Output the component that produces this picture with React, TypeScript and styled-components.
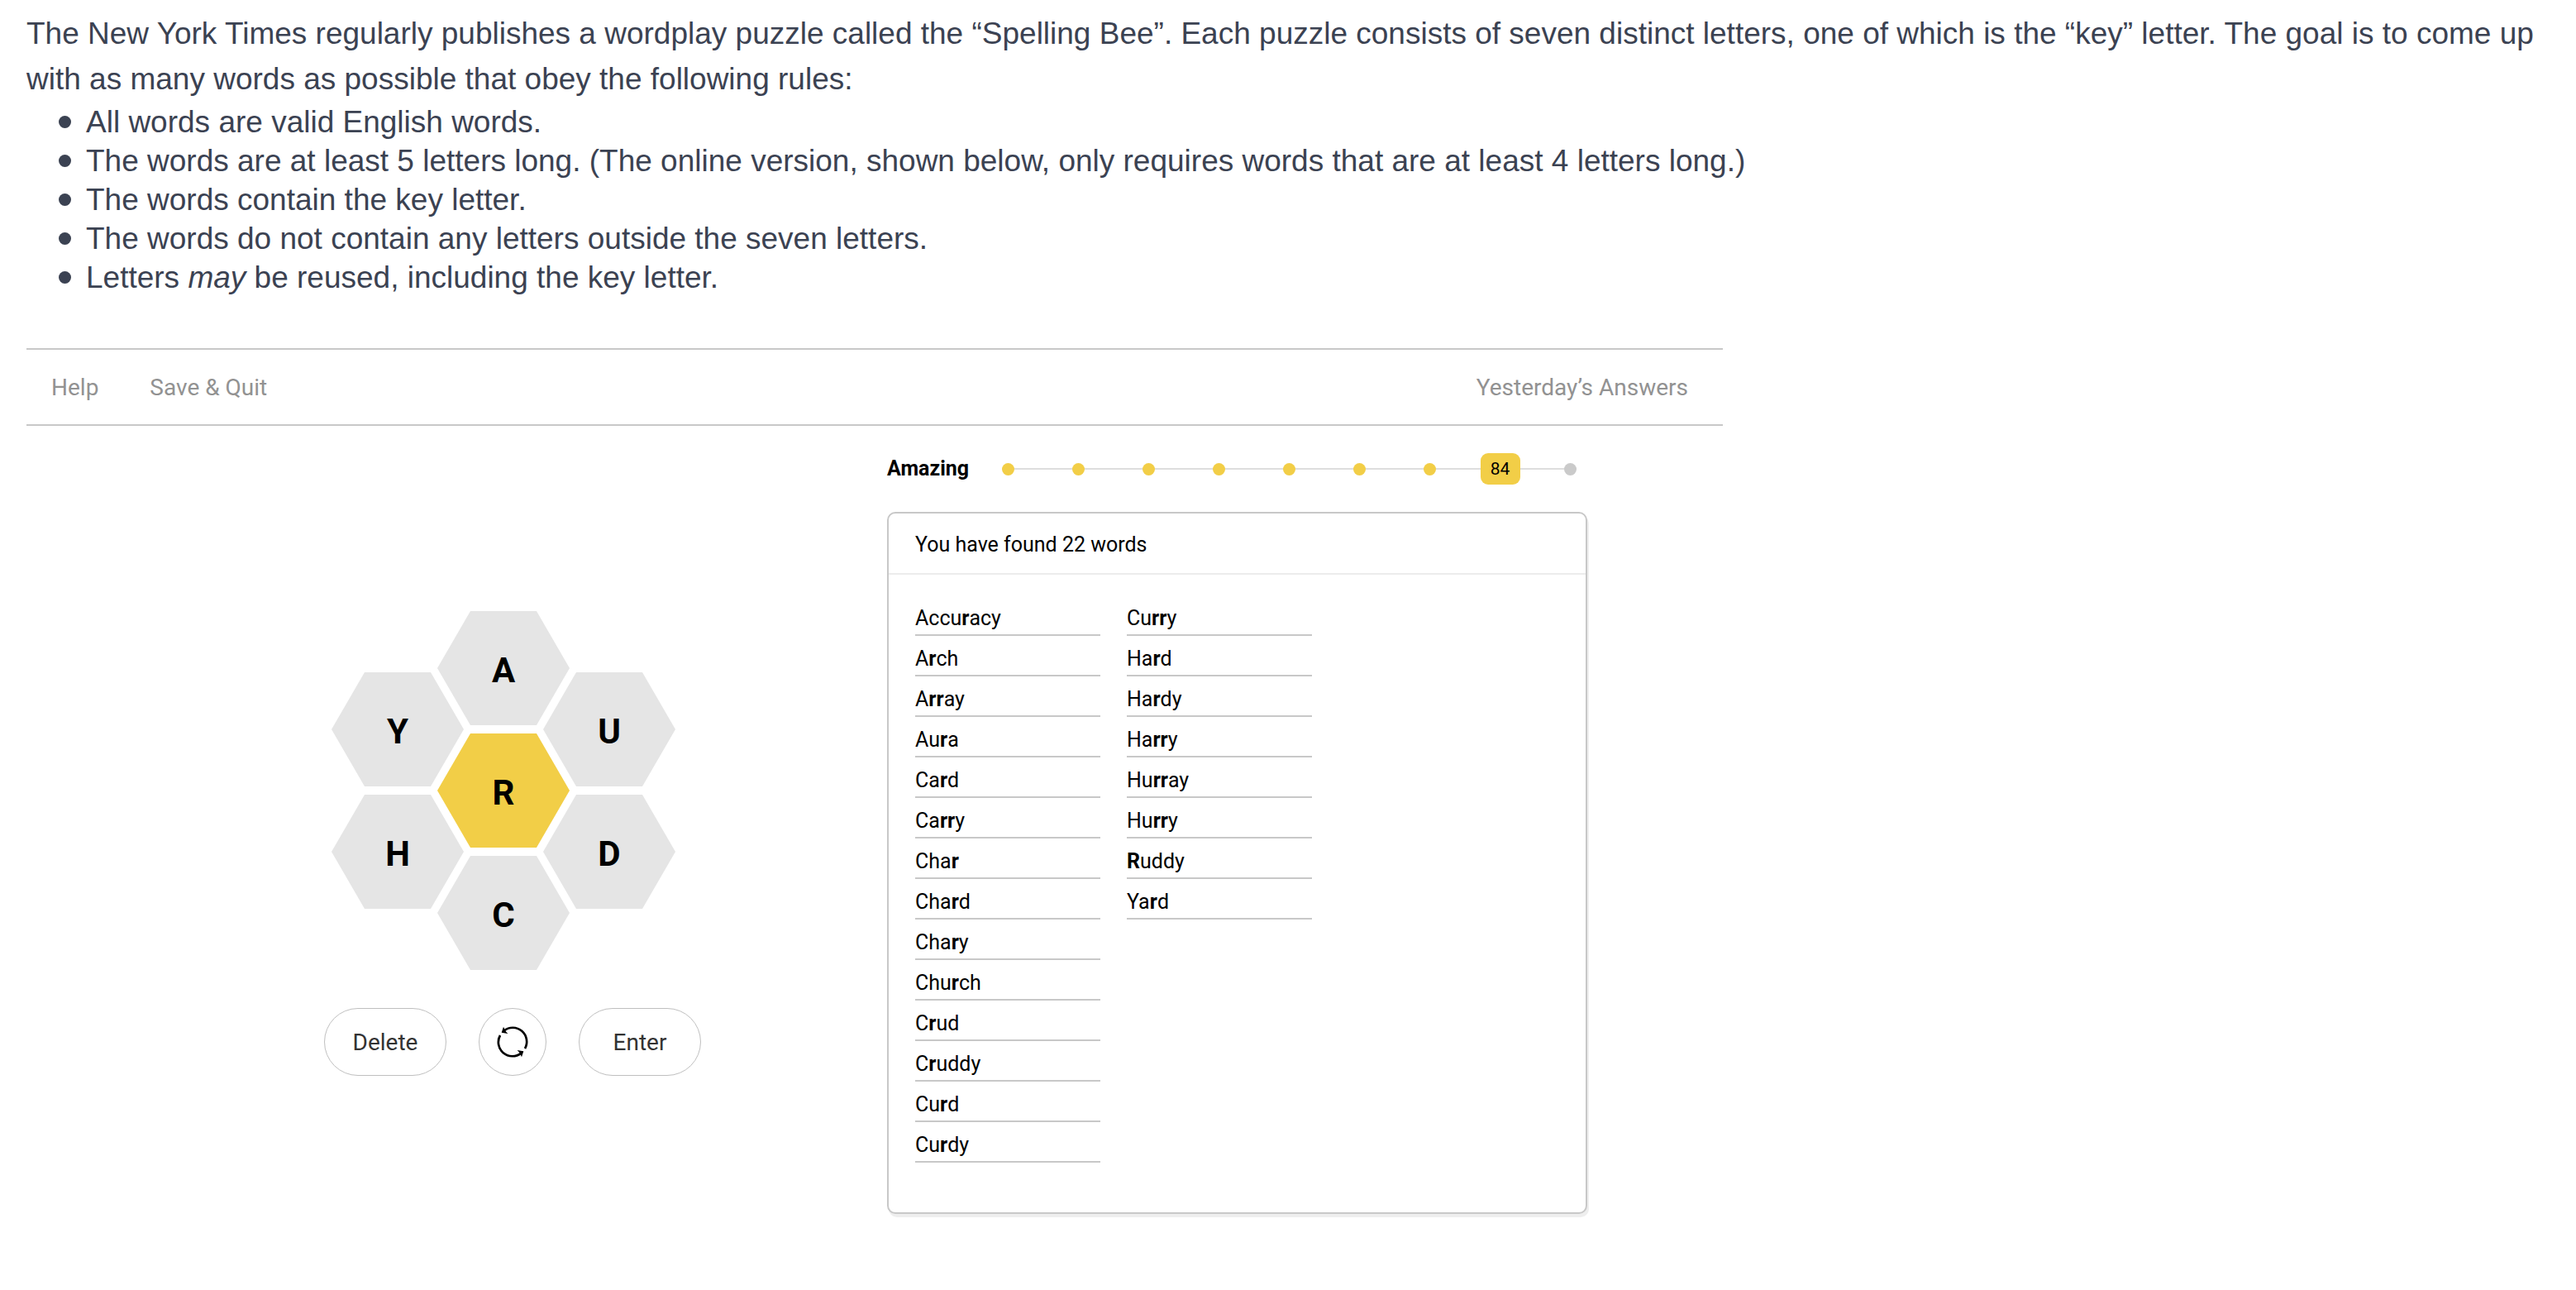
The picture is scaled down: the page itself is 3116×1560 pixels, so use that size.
import React from "react";
import styled, { createGlobalStyle } from "styled-components";

const GlobalStyle = createGlobalStyle`
  *, *::before, *::after { box-sizing: border-box; }
  body { margin: 0; background: #ffffff; }
`;

const uiFont = `Roboto, "Liberation Sans", sans-serif`;
const bodyFont = `"Liberation Sans", Arial, sans-serif`;
const yellow = "#f2ce47";
const lineGrey = "#c8c8c8";

const Page = styled.main`
  padding: 13px 16px 80px 32px;
  font-family: ${uiFont};
  color: #000000;
`;

const Intro = styled.section`
  font-family: ${bodyFont};
  font-size: 37px;
  color: #3b4252;
`;

const Lead = styled.p`
  margin: 0;
  line-height: 55px;
`;

const Rules = styled.ul`
  margin: 0;
  padding: 1px 0 0 39px;
  list-style: none;
  line-height: 47px;
`;

const Rule = styled.li`
  display: flex;
  align-items: center;
  gap: 18px;

  &::before {
    content: "";
    flex: none;
    width: 15px;
    height: 15px;
    border-radius: 50%;
    background: #3b4252;
  }
`;

const Game = styled.section`
  max-width: 2052px;
  margin-top: 62px;
`;

const Nav = styled.nav`
  display: flex;
  align-items: center;
  gap: 62px;
  height: 94px;
  padding: 2px 42px 0 30px;
  border-top: 2px solid ${lineGrey};
  border-bottom: 2px solid ${lineGrey};
`;

const NavLink = styled.a<{ $end?: boolean }>`
  margin-left: ${(p) => (p.$end ? "auto" : "0")};
  font-size: 28px;
  line-height: 32px;
  color: #929292;
  text-decoration: none;
`;

const Board = styled.div`
  display: grid;
  grid-template-columns: 1041px minmax(0, 847px);
  align-items: start;
  padding-top: 33px;
`;

const Controls = styled.div`
  display: flex;
  flex-direction: column;
  gap: 46px;
  padding: 191px 0 0 360px;
`;

const Hive = styled.div`
  display: flex;
  align-items: center;
  padding-left: 9px;
`;

const HiveColumn = styled.div`
  display: flex;
  flex-direction: column;
  gap: 10px;

  & + & { margin-left: -32px; }
`;

const Cell = styled.button<{ $center?: boolean }>`
  width: 160px;
  height: 138px;
  padding: 4px 0 0;
  border: 0;
  clip-path: polygon(25% 0, 75% 0, 100% 50%, 75% 100%, 25% 100%, 0 50%);
  background: ${(p) => (p.$center ? yellow : "#e5e5e5")};
  font-family: ${uiFont};
  font-size: 42px;
  font-weight: 700;
  color: #000000;
  cursor: pointer;
`;

const Actions = styled.div`
  display: flex;
  gap: 39px;
`;

const ActionButton = styled.button<{ $round?: boolean }>`
  display: flex;
  align-items: center;
  justify-content: center;
  width: ${(p) => (p.$round ? "82px" : "148px")};
  height: 82px;
  padding: 0;
  border: 1px solid #bfbfbf;
  border-radius: 41px;
  background: #ffffff;
  font-family: ${uiFont};
  font-size: 28px;
  color: #333333;
  cursor: pointer;
`;

const Progress = styled.div`
  display: flex;
  align-items: center;
  height: 38px;
  margin-bottom: 33px;
  padding-right: 13px;
`;

const Rank = styled.strong`
  flex: none;
  width: 139px;
  font-size: 25px;
  line-height: 32px;
  font-weight: 700;
`;

const Track = styled.ol`
  flex: 1;
  display: flex;
  justify-content: space-between;
  align-items: center;
  margin: 0;
  padding: 0;
  list-style: none;
  background: linear-gradient(#dedede, #dedede) center / 100% 2px no-repeat;
`;

const Step = styled.li<{ $reached: boolean }>`
  display: flex;
  align-items: center;
  justify-content: center;
  width: 15px;
  height: 15px;
  border-radius: 50%;
  background: ${(p) => (p.$reached ? yellow : "#cacaca")};
`;

const Score = styled.span`
  flex: none;
  width: 48px;
  border-radius: 9px;
  background: ${yellow};
  font-size: 21px;
  line-height: 38px;
  text-align: center;
`;

const Panel = styled.section`
  border: 2px solid ${lineGrey};
  border-radius: 10px;
  background: #ffffff;
  box-shadow: 2px 4px 0 #eeeeee;
`;

const PanelTitle = styled.h2`
  margin: 0;
  padding: 22px 32px 18px;
  border-bottom: 2px solid #ececec;
  font-size: 25px;
  line-height: 32px;
  font-weight: 400;
`;

const WordList = styled.ul`
  display: grid;
  grid-template-columns: repeat(auto-fill, 224px);
  grid-template-rows: repeat(14, 49px);
  grid-auto-flow: column;
  column-gap: 32px;
  margin: 0;
  padding: 25px 32px 60px;
  list-style: none;
`;

const Word = styled.li`
  padding-top: 12px;
  border-bottom: 2px solid ${lineGrey};
  font-size: 25px;
  line-height: 32px;

  b { font-weight: 700; }
`;

const words = [
  "Accuracy", "Arch", "Array", "Aura", "Card", "Carry", "Char",
  "Chard", "Chary", "Church", "Crud", "Cruddy", "Curd", "Curdy",
  "Curry", "Hard", "Hardy", "Harry", "Hurray", "Hurry", "Ruddy", "Yard",
];

const hive = [["Y", "H"], ["A", "R", "C"], ["U", "D"]];
const keyLetter = "R";
const rankSteps = 9;
const currentStep = 7;

const markKey = (word: string) =>
  word.split(/(r+)/i).map((part, i) => (i % 2 ? <b key={i}>{part}</b> : part));

const ShuffleIcon = () => (
  <svg width="40" height="40" viewBox="0 0 120 120" aria-hidden="true">
    <path d="M29 19A51 51 0 0 1 105 84" fill="none" stroke="#000" strokeWidth="8" />
    <path d="M15 36A51 51 0 0 0 91 101" fill="none" stroke="#000" strokeWidth="8" />
    <path d="M27 5L20 26L43 30L34 20Z" />
    <path d="M93 115L100 94L77 90L86 100Z" />
  </svg>
);

export default function App() {
  return (
    <Page>
      <GlobalStyle />
      <Intro>
        <Lead>
          The New York Times regularly publishes a wordplay puzzle called the “Spelling Bee”. Each puzzle consists of
          seven distinct letters, one of which is the “key” letter. The goal is to come up with as many words as
          possible that obey the following rules:
        </Lead>
        <Rules>
          <Rule>All words are valid English words.</Rule>
          <Rule>
            The words are at least 5 letters long. (The online version, shown below, only requires words that are at
            least 4 letters long.)
          </Rule>
          <Rule>The words contain the key letter.</Rule>
          <Rule>The words do not contain any letters outside the seven letters.</Rule>
          <Rule><span>Letters <em>may</em> be reused, including the key letter.</span></Rule>
        </Rules>
      </Intro>

      <Game>
        <Nav>
          <NavLink href="#help">Help</NavLink>
          <NavLink href="#save">Save &amp; Quit</NavLink>
          <NavLink href="#answers" $end>Yesterday’s Answers</NavLink>
        </Nav>
        <Board>
          <Controls>
            <Hive>
              {hive.map((column) => (
                <HiveColumn key={column.join("")}>
                  {column.map((letter) => (
                    <Cell key={letter} type="button" $center={letter === keyLetter}>{letter}</Cell>
                  ))}
                </HiveColumn>
              ))}
            </Hive>
            <Actions>
              <ActionButton type="button">Delete</ActionButton>
              <ActionButton type="button" $round aria-label="Shuffle"><ShuffleIcon /></ActionButton>
              <ActionButton type="button">Enter</ActionButton>
            </Actions>
          </Controls>
          <div>
            <Progress>
              <Rank>Amazing</Rank>
              <Track>
                {Array.from({ length: rankSteps }, (_, i) => (
                  <Step key={i} $reached={i <= currentStep}>
                    {i === currentStep && <Score>84</Score>}
                  </Step>
                ))}
              </Track>
            </Progress>
            <Panel>
              <PanelTitle>You have found 22 words</PanelTitle>
              <WordList>
                {words.map((word) => <Word key={word}>{markKey(word)}</Word>)}
              </WordList>
            </Panel>
          </div>
        </Board>
      </Game>
    </Page>
  );
}
